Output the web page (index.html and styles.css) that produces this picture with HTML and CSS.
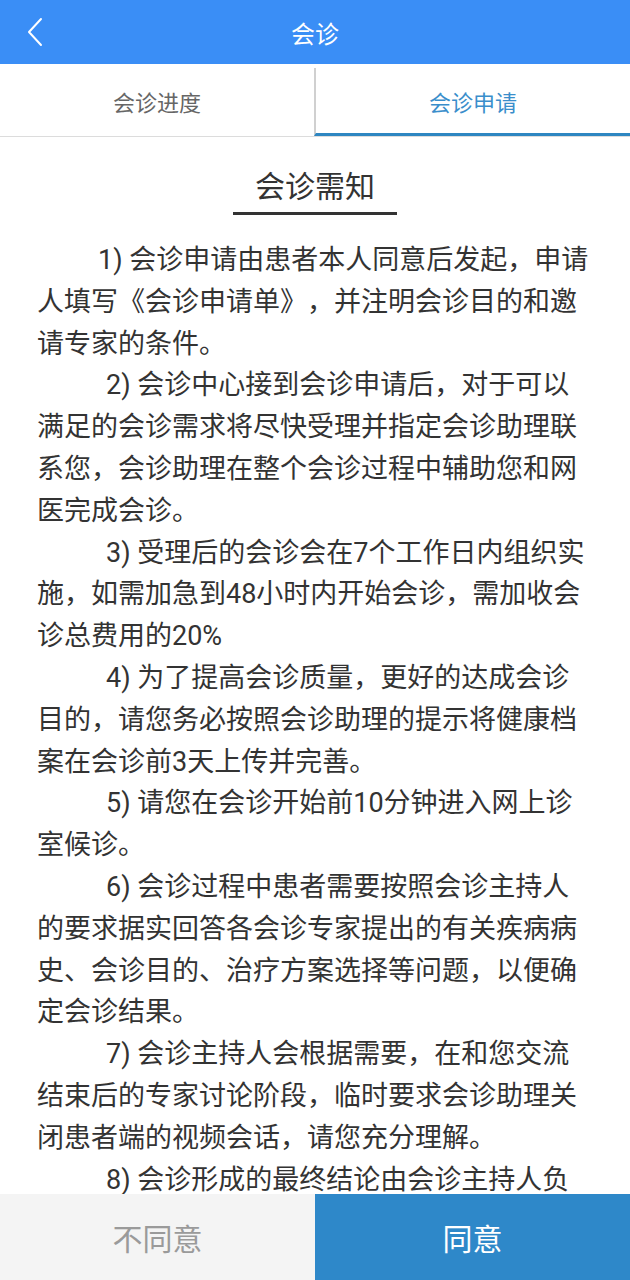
FILE: index.html
```html
<!DOCTYPE html>
<html lang="zh-CN">
<head>
<meta charset="utf-8">
<title>会诊</title>
<link rel="stylesheet" href="styles.css">
</head>
<body>
<div class="page">
  <header class="nav">
    <span class="back">
      <svg width="18" height="30" viewBox="0 0 18 30"><path d="M15 2 L3 15 L15 28" fill="none" stroke="#fff" stroke-width="2" stroke-linecap="round" stroke-linejoin="round"/></svg>
    </span>
    <h1 class="nav-title">会诊</h1>
  </header>
  <div class="tabs">
    <div class="tab">会诊进度</div>
    <div class="tab active">会诊申请</div>
  </div>
  <main class="content">
    <div class="heading"><span class="heading-text">会诊需知</span></div>
    <p class="item first">1) 会诊申请由患者本人同意后发起，申请人填写《会诊申请单》，并注明会诊目的和邀请专家的条件。</p>
    <p class="item">2) 会诊中心接到会诊申请后，对于可以满足的会诊需求将尽快受理并指定会诊助理联系您，会诊助理在整个会诊过程中辅助您和网医完成会诊。</p>
    <p class="item">3) 受理后的会诊会在7个工作日内组织实施，如需加急到48小时内开始会诊，需加收会诊总费用的20%</p>
    <p class="item">4) 为了提高会诊质量，更好的达成会诊目的，请您务必按照会诊助理的提示将健康档案在会诊前3天上传并完善。</p>
    <p class="item">5) 请您在会诊开始前10分钟进入网上诊室候诊。</p>
    <p class="item">6) 会诊过程中患者需要按照会诊主持人的要求据实回答各会诊专家提出的有关疾病病史、会诊目的、治疗方案选择等问题，以便确定会诊结果。</p>
    <p class="item">7) 会诊主持人会根据需要，在和您交流结束后的专家讨论阶段，临时要求会诊助理关闭患者端的视频会话，请您充分理解。</p>
    <p class="item">8) 会诊形成的最终结论由会诊主持人负责汇总，并由会诊助理整理后反馈给您。</p>
  </main>
  <footer class="actions">
    <button class="btn disagree">不同意</button>
    <button class="btn agree">同意</button>
  </footer>
</div>
</body>
</html>
```

FILE: styles.css
```css
* { box-sizing: border-box; }
html, body {
  margin: 0;
  padding: 0;
  background: #fff;
}
body {
  font-family: Roboto, "Noto Sans CJK SC", "Noto Sans", sans-serif;
  color: #333;
  text-spacing-trim: space-all;
}
.page {
  width: 630px;
  height: 1280px;
  overflow: hidden;
  position: relative;
}
.nav {
  height: 64px;
  background: #3a8ef6;
  display: flex;
  align-items: center;
  justify-content: center;
  position: relative;
}
.back {
  position: absolute;
  left: 26px;
  top: 17px;
  display: flex;
}
.nav-title {
  margin: 0;
  font-size: 24px;
  font-weight: normal;
  color: #fff;
}
.tabs {
  display: flex;
  height: 73px;
  border-bottom: 1px solid #dcdcdc;
}
.tab {
  flex: 1;
  display: flex;
  align-items: center;
  justify-content: center;
  font-size: 22px;
  color: #666;
  padding-top: 2px;
}
.tab.active {
  color: #3a8ecb;
  border-left: 2px solid #d0d0d0;
  margin-top: 4px;
  padding-top: 0;
  border-bottom: 3px solid #2e86c1;
}
.content {
  padding: 0 37px;
}
.heading {
  text-align: center;
  margin-top: 30px;
  margin-bottom: 25px;
}
.heading-text {
  display: inline-block;
  font-size: 30px;
  line-height: 40px;
  padding: 0 22px 5px;
  border-bottom: 3px solid #333;
}
.item {
  margin: 0;
  font-size: 27px;
  line-height: 41.8px;
  text-indent: 69px;
  text-align: left;
  font-feature-settings: "halt" 0, "chws" 0;
}
.item.first {
  text-indent: 61px;
}
.actions {
  position: absolute;
  left: 0;
  right: 0;
  bottom: 0;
  height: 86px;
  display: flex;
}
.btn {
  flex: 1;
  border: 0;
  margin: 0;
  font-family: inherit;
  font-size: 30px;
  cursor: pointer;
}
.disagree {
  background: #f4f4f4;
  color: #9a9a9a;
}
.agree {
  background: #2e88c9;
  color: #fff;
}
```
